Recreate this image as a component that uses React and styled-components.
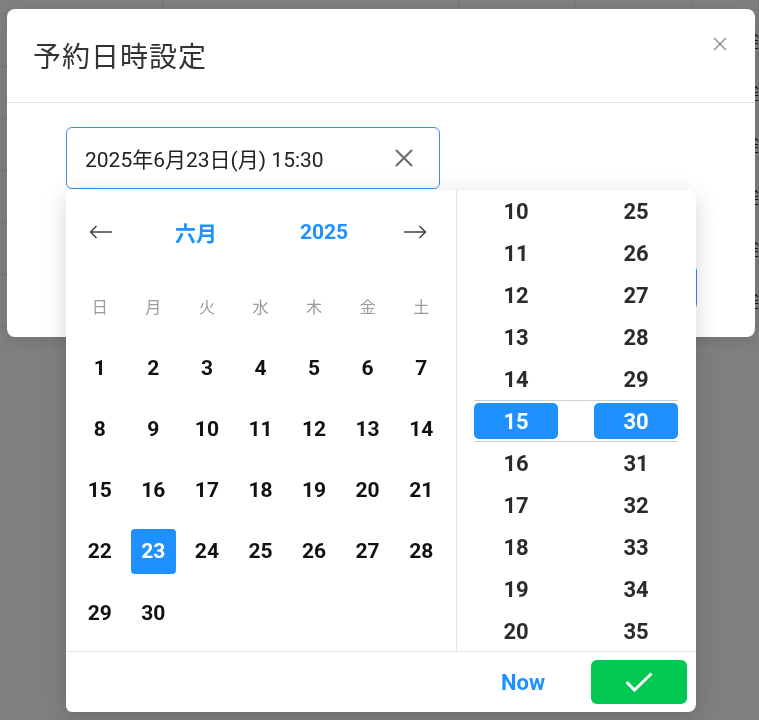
import React from "react"
import styled, { createGlobalStyle } from "styled-components"

const GlobalStyle = createGlobalStyle`
  html, body { margin: 0; padding: 0; }
  body {
    font-family: Roboto, "Noto Sans CJK JP", sans-serif;
    background: #fff;
    width: 759px;
    height: 720px;
    overflow: hidden;
  }
  * { box-sizing: border-box; }
`

const BLUE = "#1e90ff"

// page behind the overlay
const Table = styled.div`
  display: grid;
  grid-template-columns: 163px 296px 116px 118px 66px;
  grid-template-rows: 15px;
  grid-auto-rows: 52px;
`
const Cell = styled.div`
  border-right: 1px solid #e8e8e8;
  border-bottom: 1px solid #e8e8e8;
  display: flex;
  align-items: center;
  padding-left: ${p => p.$pad || 0}px;
  font-size: 16px;
  color: #333;
  overflow: hidden;
`

const Overlay = styled.div`
  position: fixed;
  inset: 0;
  background: rgba(0, 0, 0, 0.5);
  padding: 9px 4px 0 7px;
`

const Modal = styled.div`
  width: 748px;
  background: #fff;
  border-radius: 8px;
  box-shadow: 0 4px 16px rgba(0, 0, 0, 0.12);
`

const Header = styled.div`
  height: 94px;
  border-bottom: 1px solid #e2e2e8;
  display: flex;
  justify-content: space-between;
  padding: 0 28px 2px 26px;
`

const Title = styled.h2`
  align-self: center;
  margin: 0;
  font-family: "Noto Sans CJK JP", sans-serif;
  font-weight: 400;
  font-size: 28px;
  letter-spacing: 1px;
  color: #333;
`

const CloseBtn = styled.button`
  margin-top: 28px;
  width: 14px;
  height: 14px;
  padding: 0;
  border: 0;
  background: none;
  display: flex;
`

const Body = styled.div`
  padding: 24px 58px 27px 59px;
`

const InputWrap = styled.div`
  position: relative;
  width: 374px;
  height: 62px;
  border: 1px solid #3591ee;
  border-radius: 6px;
  display: flex;
  align-items: center;
  justify-content: space-between;
  padding: 0 26px 0 18px;
`

const InputText = styled.span`
  font-size: 21px;
  color: #222;
`

const SubmitBar = styled.div`
  margin-top: 76px;
  height: 45px;
  border: 1px solid ${BLUE};
  border-radius: 6px;
`

const Popup = styled.div`
  position: absolute;
  top: calc(100% + 2px);
  left: -1px;
  width: 630px;
  background: #fff;
  border-radius: 0 8px 8px 6px;
  box-shadow: 0 6px 24px rgba(0, 0, 0, 0.16);
  z-index: 2;
`

const PopupMain = styled.div`
  display: flex;
  height: 461px;
`

const Calendar = styled.div`
  width: 390px;
  padding: 0 8px 0 7px;
`

const NavRow = styled.div`
  height: 84px;
  display: grid;
  grid-template-columns: 43px 128px 128px 39px;
  align-items: center;
  padding-left: 16px;
`

const NavArrow = styled.span`
  display: flex;
  justify-self: ${p => (p.$end ? "end" : "start")};
`

const NavLabel = styled.span`
  text-align: center;
  font-size: 21px;
  font-weight: 700;
  color: ${BLUE};
`

const DayGrid = styled.div`
  display: grid;
  grid-template-columns: repeat(7, 1fr);
  grid-template-rows: 63px;
  grid-auto-rows: 61.25px;
`

const Weekday = styled.div`
  display: flex;
  align-items: center;
  justify-content: center;
  font-family: "Noto Sans CJK JP", sans-serif;
  font-size: 16px;
  color: #9a9a9a;
`

const Day = styled.div`
  display: flex;
  align-items: center;
  justify-content: center;
`

const DayNum = styled.span`
  width: 45px;
  height: 45px;
  border-radius: 4px;
  display: flex;
  align-items: center;
  justify-content: center;
  font-size: 21px;
  font-weight: 700;
  color: ${p => (p.$active ? "#fff" : "#111")};
  background: ${p => (p.$active ? BLUE : "transparent")};
`

const TimePanel = styled.div`
  flex: 1;
  border-left: 1px solid #e6e6e6;
  overflow: hidden;
`

const TimeRow = styled.div`
  height: 42px;
  margin: 0 18px 0 17px;
  display: flex;
  justify-content: space-between;
  align-items: center;
  border-top: 1px solid ${p => (p.$active ? "#cfcfcf" : "transparent")};
  border-bottom: 1px solid ${p => (p.$active ? "#cfcfcf" : "transparent")};
`

const TimeCell = styled.span`
  width: 84px;
  height: 36px;
  border-radius: 5px;
  display: flex;
  align-items: center;
  justify-content: center;
  font-size: 22px;
  font-weight: 700;
  color: ${p => (p.$active ? "#fff" : "#2b2b2b")};
  background: ${p => (p.$active ? BLUE : "transparent")};
`

const Footer = styled.div`
  height: 61px;
  border-top: 1px solid #e6e6e6;
  display: flex;
  justify-content: flex-end;
  align-items: center;
  padding-right: 9px;
  gap: 23px;
`

const NowBtn = styled.button`
  width: 90px;
  border: 0;
  background: none;
  font-family: Roboto, sans-serif;
  font-size: 22px;
  font-weight: 700;
  color: ${BLUE};
  padding: 0;
`

const OkBtn = styled.button`
  width: 96px;
  height: 44px;
  border: 0;
  border-radius: 6px;
  background: #00c853;
  display: flex;
  align-items: center;
  justify-content: center;
`

const weekdays = ["日", "月", "火", "水", "木", "金", "土"]
const days = Array.from({ length: 30 }, (_, i) => i + 1)
const hours = Array.from({ length: 11 }, (_, i) => i + 10)

export default function App() {
  const rows = Array.from({ length: 7 })
  return (
    <>
      <GlobalStyle />
      <Table>
        {rows.map((_, r) =>
          [0, 1, 2, 3, 4].map(c => (
            <Cell key={r + "-" + c} $pad={c === 4 ? 55 : 0}>
              {c === 4 && r > 0 ? "合" : ""}
            </Cell>
          ))
        )}
      </Table>
      <Overlay>
        <Modal>
          <Header>
            <Title>予約日時設定</Title>
            <CloseBtn>
              <svg width="14" height="14" viewBox="0 0 14 14">
                <path d="M1 1L13 13M13 1L1 13" stroke="#8a8a8a" strokeWidth="1.4" />
              </svg>
            </CloseBtn>
          </Header>
          <Body>
            <InputWrap>
              <InputText>2025年6月23日(月) 15:30</InputText>
              <svg width="18" height="18" viewBox="0 0 18 18">
                <path d="M1 1L17 17M17 1L1 17" stroke="#6e6e6e" strokeWidth="2.2" />
              </svg>
              <Popup>
                <PopupMain>
                  <Calendar>
                    <NavRow>
                      <NavArrow>
                        <svg width="24" height="14" viewBox="0 0 24 14">
                          <path d="M23 7H1.5M7.5 1L1.5 7L7.5 13" fill="none" stroke="#3d4450" strokeWidth="1.5" />
                        </svg>
                      </NavArrow>
                      <NavLabel>六月</NavLabel>
                      <NavLabel>2025</NavLabel>
                      <NavArrow $end>
                        <svg width="24" height="14" viewBox="0 0 24 14">
                          <path d="M1 7H22.5M16.5 1L22.5 7L16.5 13" fill="none" stroke="#3d4450" strokeWidth="1.5" />
                        </svg>
                      </NavArrow>
                    </NavRow>
                    <DayGrid>
                      {weekdays.map(w => (
                        <Weekday key={w}>{w}</Weekday>
                      ))}
                      {days.map(d => (
                        <Day key={d}>
                          <DayNum $active={d === 23}>{d}</DayNum>
                        </Day>
                      ))}
                    </DayGrid>
                  </Calendar>
                  <TimePanel>
                    {hours.map(h => (
                      <TimeRow key={h} $active={h === 15}>
                        <TimeCell $active={h === 15}>{h}</TimeCell>
                        <TimeCell $active={h === 15}>{h + 15}</TimeCell>
                      </TimeRow>
                    ))}
                  </TimePanel>
                </PopupMain>
                <Footer>
                  <NowBtn>Now</NowBtn>
                  <OkBtn>
                    <svg width="28" height="20" viewBox="0 0 28 20">
                      <path d="M1.5 10L9.5 18L26.5 1.5" fill="none" stroke="#fff" strokeWidth="3" />
                    </svg>
                  </OkBtn>
                </Footer>
              </Popup>
            </InputWrap>
            <SubmitBar />
          </Body>
        </Modal>
      </Overlay>
    </>
  )
}
